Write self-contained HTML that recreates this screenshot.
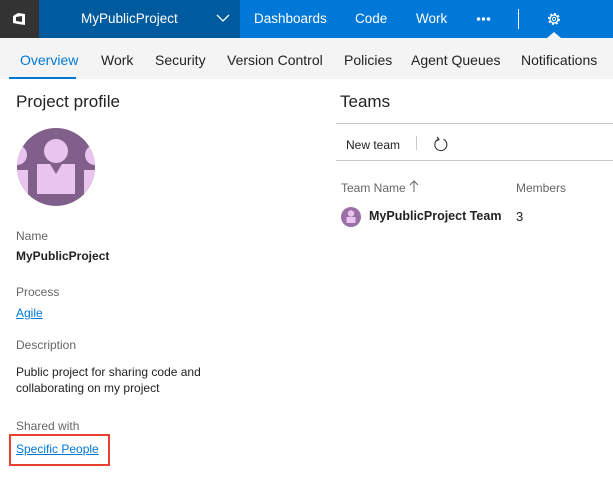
<!DOCTYPE html>
<html><head><meta charset="utf-8"><style>
*{margin:0;padding:0;box-sizing:border-box}
body{width:613px;height:486px;overflow:hidden;background:#fff;font-family:"Liberation Sans",sans-serif;position:relative;color:#222}
.a{position:absolute;white-space:nowrap}
.top{position:absolute;left:0;top:0;width:613px;height:38px;background:#0078d7}
.nav2{position:absolute;left:0;top:38px;width:613px;height:41px;background:#f4f4f4}
.w{color:#fff;font-size:14px;top:11px}
.n{color:#222;font-size:14px;top:52px}
.lbl{font-size:12px;color:#666}
.val{font-size:12px;color:#222}
a{color:#0078d7;text-decoration:underline}
</style></head><body>
<div class="top"></div>
<div class="a" style="left:0;top:0;width:39px;height:38px;background:#333"></div>
<svg class="a" style="left:11px;top:11px" width="16" height="16" viewBox="0 0 16 16"><path d="M2 5 L7 2 L14 3 L14 14 L7 13 L2 12 Z M5 6 L5 10 L11 11 L11 5 Z" fill="#fff" fill-rule="evenodd"/></svg>
<div class="a" style="left:39px;top:0;width:201px;height:38px;background:#005a9e"></div>
<div class="a w" style="left:81px;font-size:13.5px">MyPublicProject</div>
<svg class="a" style="left:216px;top:14px" width="14" height="9" viewBox="0 0 14 9"><path d="M1 1 L7 7 L13 1" stroke="#fff" stroke-width="1.3" fill="none"/></svg>
<div class="a w" style="left:254px;font-size:13.5px">Dashboards</div>
<div class="a w" style="left:355px;font-size:13.5px">Code</div>
<div class="a w" style="left:416px;font-size:13.5px">Work</div>
<div class="a" style="left:476px;top:17px;width:15px;height:4px;background:radial-gradient(circle,#fff 1.5px,transparent 2px) 0 0/5px 4px repeat-x"></div>
<div class="a" style="left:518px;top:9px;width:1px;height:20px;background:#fff"></div>
<svg class="a" style="left:546px;top:11px" width="16" height="16" viewBox="0 0 16 16"><circle cx="8" cy="8" r="5" fill="none" stroke="#fff" stroke-width="2" stroke-dasharray="2 1.9"/><circle cx="8" cy="8" r="4" fill="none" stroke="#fff" stroke-width="1.2"/><circle cx="8" cy="8" r="1.6" fill="none" stroke="#fff" stroke-width="1"/></svg>
<div class="a" style="left:547px;top:32px;width:0;height:0;border-left:7px solid transparent;border-right:7px solid transparent;border-bottom:6px solid #f4f4f4"></div>
<div class="nav2"></div>
<div class="a n" style="left:20px;color:#0078d7">Overview</div>
<div class="a" style="left:9px;top:77px;width:67px;height:2px;background:#0078d7"></div>
<div class="a n" style="left:101px">Work</div>
<div class="a n" style="left:155px">Security</div>
<div class="a n" style="left:227px">Version Control</div>
<div class="a n" style="left:344px">Policies</div>
<div class="a n" style="left:411px">Agent Queues</div>
<div class="a n" style="left:521px">Notifications</div>
<div class="a" style="left:16px;top:92px;font-size:17px;color:#222">Project profile</div>
<div class="a" style="left:340px;top:92px;font-size:17px;color:#222">Teams</div>
<div class="a" style="left:336px;top:123px;width:277px;height:1px;background:#c8c8c8"></div>
<svg class="a" style="left:17px;top:128px" width="78" height="78" viewBox="0 0 78 78"><defs><clipPath id="c"><circle cx="39" cy="39" r="39"/></clipPath></defs><circle cx="39" cy="39" r="39" fill="#80608a"/><g clip-path="url(#c)" fill="#e8c4ee"><circle cx="39" cy="23" r="12"/><path d="M20 36 L33 36 L39 46 L45 36 L58 36 L58 66 L20 66 Z"/><circle cx="0" cy="27" r="10"/><circle cx="78" cy="27" r="10"/><rect x="-5" y="42" width="16" height="26"/><rect x="67" y="42" width="16" height="26"/></g></svg>
<div class="a lbl" style="left:16px;top:229px">Name</div>
<div class="a val" style="left:16px;top:249px;font-weight:bold">MyPublicProject</div>
<div class="a lbl" style="left:16px;top:285px">Process</div>
<div class="a val" style="left:16px;top:306px"><a>Agile</a></div>
<div class="a lbl" style="left:16px;top:338px">Description</div>
<div class="a val" style="left:16px;top:364px;line-height:16px">Public project for sharing code and<br>collaborating on my project</div>
<div class="a lbl" style="left:16px;top:419px">Shared with</div>
<div class="a" style="left:9px;top:434px;width:101px;height:32px;border:2px solid #e8412f"></div>
<div class="a val" style="left:16px;top:442px"><a>Specific People</a></div>
<div class="a" style="left:346px;top:138px;font-size:12px">New team</div>
<div class="a" style="left:416px;top:136px;width:1px;height:14px;background:#c8c8c8"></div>
<svg class="a" style="left:433px;top:136px" width="16" height="16" viewBox="0 0 16 16"><path d="M10.5 3.2 A6 6 0 1 1 5 3.3" fill="none" stroke="#333" stroke-width="1.1"/><path d="M4 1 L6 3.5 L3.5 5" fill="none" stroke="#333" stroke-width="1.1"/></svg>
<div class="a" style="left:336px;top:160px;width:277px;height:1px;background:#c8c8c8"></div>
<div class="a lbl" style="left:341px;top:181px">Team Name</div>
<svg class="a" style="left:409px;top:180px" width="10" height="12" viewBox="0 0 10 12"><path d="M5 1 L5 12 M1 5 L5 1 L9 5" fill="none" stroke="#666" stroke-width="1"/></svg>
<div class="a lbl" style="left:516px;top:181px">Members</div>
<svg class="a" style="left:341px;top:207px" width="20" height="20" viewBox="0 0 20 20"><circle cx="10" cy="10" r="10" fill="#9a6fa6"/><circle cx="10" cy="6.5" r="3.2" fill="#e8c4ee"/><rect x="5.5" y="10" width="9" height="6" fill="#e8c4ee"/></svg>
<div class="a" style="left:369px;top:209px;font-size:12.5px;font-weight:bold">MyPublicProject Team</div>
<div class="a" style="left:516px;top:209px;font-size:13px">3</div>
</body></html>
